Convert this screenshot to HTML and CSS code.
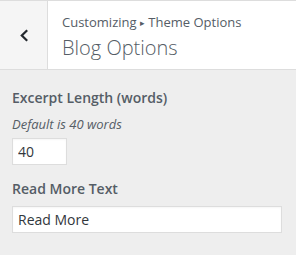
FILE: index.html
```html
<!DOCTYPE html>
<html>
<head>
<meta charset="utf-8">
<link rel="stylesheet" href="styles.css">
</head>
<body>
<div class="header">
  <div class="back">
    <svg width="12" height="14" viewBox="0 0 12 14"><polyline points="8.2,1.2 2.8,6.5 8.2,11.8" fill="none" stroke="#23282d" stroke-width="2.2" stroke-linecap="butt" stroke-linejoin="miter"/></svg>
  </div>
  <div class="title">
    <span class="action">Customizing <span class="sep">▸</span> Theme Options</span>
    <h3>Blog Options</h3>
  </div>
</div>
<div class="content">
  <div class="control">
    <span class="label">Excerpt Length (words)</span>
    <span class="desc">Default is 40 words</span>
    <input class="input small" type="text" value="40">
  </div>
  <div class="control">
    <span class="label">Read More Text</span>
    <input class="input wide" type="text" value="Read More">
  </div>
</div>
</body>
</html>
```
FILE: styles.css
```css
html, body {
  margin: 0;
  padding: 0;
  background: #eeeeee;
  font-family: "Open Sans", sans-serif;
  color: #555d66;
}
.header {
  display: flex;
  height: 68px;
  background: #fff;
  border-top: 1px solid #dddddd;
  border-bottom: 1px solid #dddddd;
}
.back {
  width: 47px;
  background: #f5f5f5;
  border-right: 1px solid #dddddd;
  display: flex;
  align-items: center;
  justify-content: flex-start;
  padding-left: 0;
}
.back svg {
  display: block;
  margin-top: 1px;
  margin-left: 19px;
}
.title {
  padding: 12px 0 0 14px;
}
.action {
  display: block;
  font-size: 13px;
  line-height: 18px;
  color: #555d66;
}
.sep {
  font-size: 9px;
  position: relative;
  top: -1px;
}
.title h3 {
  margin: 2px 0 0;
  font-size: 20px;
  font-weight: 300;
  line-height: 26px;
  color: #555d66;
}
.content {
  padding: 18px 12px 0 12px;
}
.control {
  display: flex;
  flex-direction: column;
  align-items: flex-start;
  margin-bottom: 14px;
}
.label {
  font-size: 14px;
  font-weight: 600;
  line-height: 20px;
}
.desc {
  font-size: 13px;
  font-style: italic;
  line-height: 18px;
  margin-top: 7px;
  margin-bottom: 5px;
}
.control .label + .input {
  margin-top: 7px;
}
.input {
  box-sizing: border-box;
  height: 27px;
  border: 1px solid #dddddd;
  background: #fff;
  font-family: "Open Sans", sans-serif;
  font-size: 14px;
  color: #32373c;
  padding: 0 5px;
  margin: 0;
  outline: none;
  box-shadow: inset 0 1px 2px rgba(0,0,0,0.04);
}
.small {
  width: 55px;
}
.wide {
  width: 270px;
}
```
